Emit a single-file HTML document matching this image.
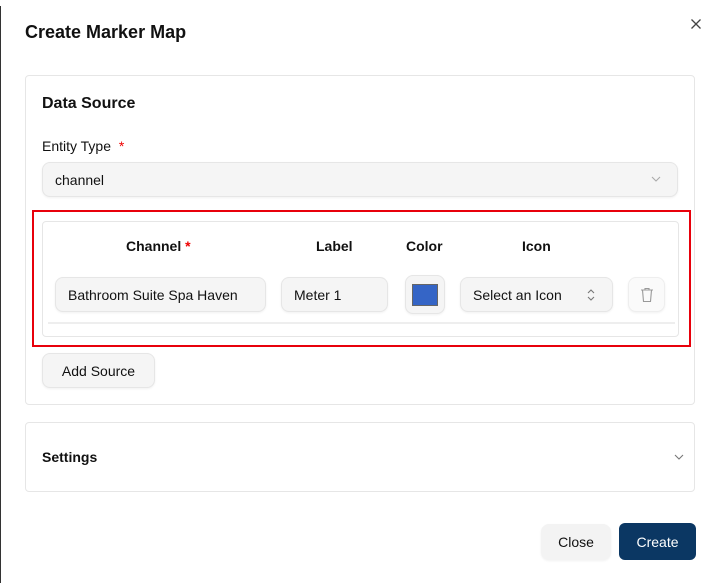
<!DOCTYPE html>
<html><head><style>
*{box-sizing:border-box;margin:0;padding:0}
body{width:716px;height:583px;background:#fff;font-family:"Liberation Sans",sans-serif;color:#111;position:relative;overflow:hidden}
.modal{position:absolute;left:0;top:0;width:716px;height:583px;background:#fff;border-top-left-radius:8px}
.a{position:absolute}
.card{position:absolute;border:1px solid #e6e6e6;border-radius:4px;background:#fff}
.inp{position:absolute;background:#f5f5f5;border:1px solid #e6e6e6;border-radius:8px;font-size:14px;display:flex;align-items:center;padding-left:12px;box-shadow:0 1px 2px rgba(0,0,0,.06)}
.h{position:absolute;font-size:14px;font-weight:bold;top:238px}
</style></head><body>
<div class="modal">
<div class="a" style="left:25px;top:22px;font-size:18px;font-weight:600">Create Marker Map</div>
<svg class="a" style="left:690px;top:18px" width="12" height="12" viewBox="0 0 12 12"><path d="M1.5 1.5L10.5 10.5M10.5 1.5L1.5 10.5" stroke="#444" stroke-width="1.3"/></svg>

<div class="card" style="left:25px;top:75px;width:670px;height:330px"></div>
<div class="a" style="left:42px;top:95px;font-size:16px;font-weight:bold">Data Source</div>
<div class="a" style="left:42px;top:138px;font-size:14px">Entity Type <span style="color:#e00;margin-left:4px">*</span></div>
<div class="inp" style="left:42px;top:162px;width:636px;height:35px">channel</div>
<svg class="a" style="left:651px;top:175px" width="10" height="8" viewBox="0 0 10 8"><path d="M1 2l4 4 4-4" stroke="#aaa" fill="none" stroke-width="1.1"/></svg>

<div class="a" style="left:32px;top:210px;width:659px;height:137px;border:2px solid #e8000b"></div>
<div class="card" style="left:42px;top:221px;width:637px;height:116px;border-radius:4px"></div>
<div class="h" style="left:126px">Channel <span style="color:#e00">*</span></div>
<div class="h" style="left:316px">Label</div>
<div class="h" style="left:406px">Color</div>
<div class="h" style="left:522px">Icon</div>
<div class="inp" style="left:55px;top:277px;width:211px;height:35px">Bathroom Suite Spa Haven</div>
<div class="inp" style="left:281px;top:277px;width:107px;height:35px">Meter 1</div>
<div class="inp" style="left:405px;top:275px;width:40px;height:39px;padding:0;justify-content:center"><div style="width:26px;height:22px;background:#3565c6;border:1px solid #666"></div></div>
<div class="inp" style="left:460px;top:277px;width:153px;height:35px">Select an Icon</div>
<svg class="a" style="left:586px;top:287px" width="10" height="16" viewBox="0 0 10 16"><path d="M2 6l3-3 3 3M2 10l3 3 3-3" stroke="#777" fill="none" stroke-width="1.1"/></svg>
<div class="inp" style="left:628px;top:277px;width:37px;height:35px;background:#fafafa;padding:0;justify-content:center;border-color:#eee">
<svg width="14" height="16" viewBox="0 0 14 16"><path d="M1 3h12M5 3V1.5h4V3M2.5 3l1 11.5h7l1-11.5" stroke="#999" fill="none" stroke-width="1.1"/></svg></div>
<div class="a" style="left:48px;top:322px;width:627px;height:2px;background:#eee"></div>

<div class="inp" style="left:42px;top:353px;width:113px;height:35px;justify-content:center;padding:0">Add Source</div>

<div class="card" style="left:25px;top:422px;width:670px;height:70px"></div>
<div class="a" style="left:42px;top:449px;font-size:14px;font-weight:bold">Settings</div>
<svg class="a" style="left:674px;top:453px" width="10" height="8" viewBox="0 0 10 8"><path d="M1 2l4 4 4-4" stroke="#777" fill="none" stroke-width="1.1"/></svg>

<div class="inp" style="left:541px;top:524px;width:70px;height:36px;justify-content:center;padding:0;border:none;background:#f3f3f3">Close</div>
<div class="a" style="left:619px;top:523px;width:77px;height:37px;background:#0b3763;border-radius:6px;color:#fff;font-size:14px;display:flex;align-items:center;justify-content:center">Create</div>
</div>
<div class="a" style="left:0;top:6px;width:1px;height:577px;background:#333"></div>
</body></html>
